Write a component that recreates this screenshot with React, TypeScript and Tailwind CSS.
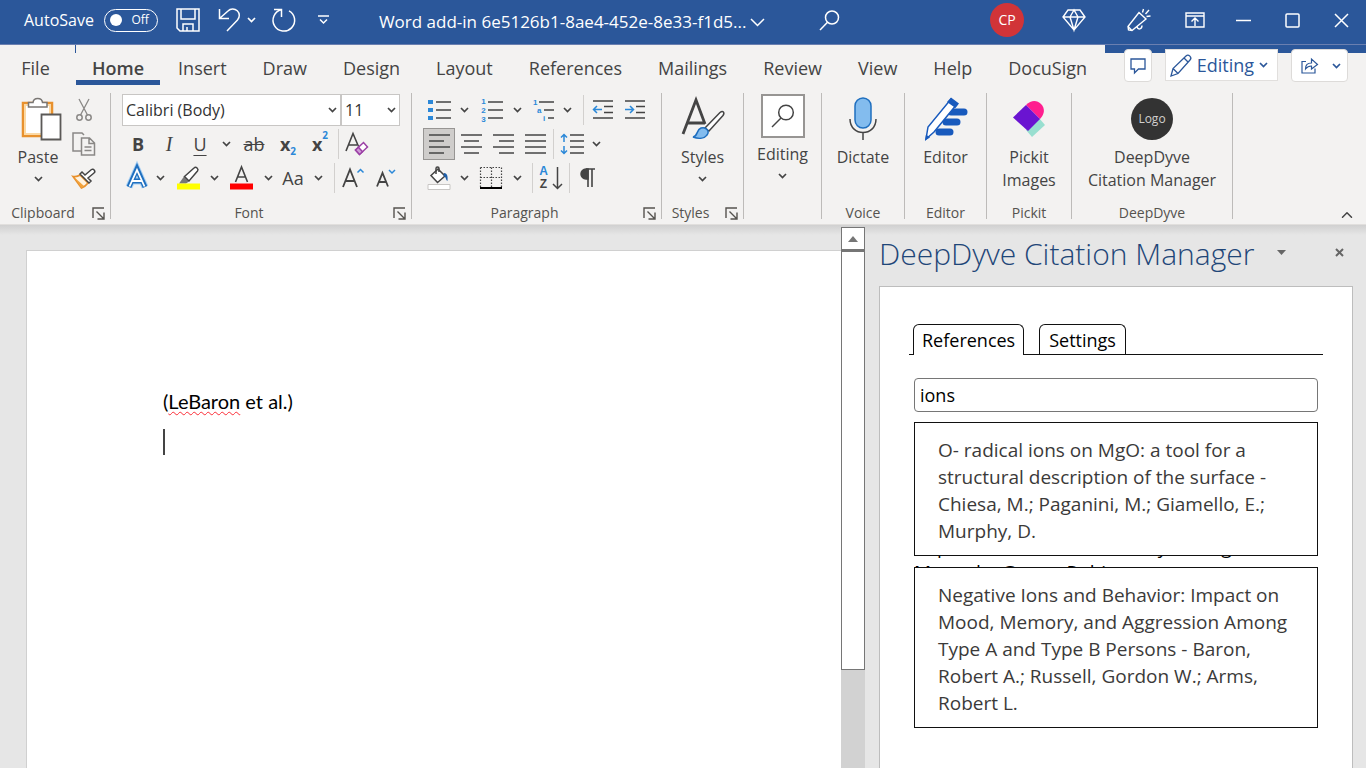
import React, { useState } from 'react';
import { ChevronUp } from 'lucide-react';

const TABS = ['File', 'Home', 'Insert', 'Draw', 'Design', 'Layout', 'References', 'Mailings', 'Review', 'View', 'Help', 'DocuSign'];

const RESULTS = [
  'O- radical ions on MgO: a tool for a structural description of the surface - Chiesa, M.; Paganini, M.; Giamello, E.; Murphy, D.',
  'Negative Ions and Behavior: Impact on Mood, Memory, and Aggression Among Type A and Type B Persons - Baron, Robert A.; Russell, Gordon W.; Arms, Robert L.',
];

type IconProps = { w: number; h: number; className?: string; children: React.ReactNode };

function Icon({ w, h, className = '', children }: IconProps) {
  return (
    <svg width={w} height={h} viewBox={`0 0 ${w} ${h}`} fill="none" stroke="currentColor" strokeWidth="1.5" className={`shrink-0 overflow-visible ${className}`} aria-hidden="true">
      {children}
    </svg>
  );
}

type ToolProps = { label: string; className?: string; children: React.ReactNode };

function Tool({ label, className = 'w-8', children }: ToolProps) {
  return (
    <button type="button" aria-label={label} className={`flex h-8 shrink-0 items-center justify-center ${className}`}>
      {children}
    </button>
  );
}

function Chevron({ className = 'w-3', label = 'More options' }: { className?: string; label?: string }) {
  return (
    <button type="button" aria-label={label} className={`flex h-8 shrink-0 items-center justify-center ${className}`}>
      <Caret />
    </button>
  );
}

function Caret() {
  return (
    <Icon w={9} h={6}>
      <path d="M1 1l3.500 3.500L8 1" strokeWidth="1.700" />
    </Icon>
  );
}

function Divider({ className = '' }: { className?: string }) {
  return <div className={`h-[30px] w-px shrink-0 bg-[#d2d0ce] ${className}`} />;
}

function Launcher({ label }: { label: string }) {
  return (
    <button type="button" aria-label={label} className="mr-[5px] ml-[6px]">
      <Icon w={13} h={13}>
        <path d="M1 11V1h11M4.500 4.500l7 7M12 5.500V12H5.500" strokeWidth="1.400" />
      </Icon>
    </button>
  );
}

type GroupProps = { label?: string; launcher?: boolean; className: string; children: React.ReactNode };

function Group({ label, launcher, className, children }: GroupProps) {
  return (
    <>
      <section aria-label={label} className={`flex h-[131px] shrink-0 flex-col ${className}`}>
        <div className="flex flex-1 pt-px">{children}</div>
        <div className="flex h-[22px] items-center text-sm text-[#55534f]">
          <span className="flex-1 text-center">{label}</span>
          {launcher && <Launcher label={`${label} settings`} />}
        </div>
      </section>
      <div className="h-[126px] w-px shrink-0 bg-[#bdbbb9]" />
    </>
  );
}

type BigButtonProps = { icon: React.ReactNode; lines: string[]; caret?: boolean; className?: string };

function BigButton({ icon, lines, caret, className = 'w-full pt-[3px]' }: BigButtonProps) {
  return (
    <button type="button" className={`flex flex-col items-center text-base leading-[23px] ${className}`}>
      <span className="mb-[5px] flex h-11 items-center justify-center">{icon}</span>
      {lines.map((line) => (
        <span key={line} className="whitespace-nowrap">{line}</span>
      ))}
      {caret && (
        <span className="flex h-5 items-center">
          <Caret />
        </span>
      )}
    </button>
  );
}

function Lines({ rows }: { rows: number[][] }) {
  return (
    <>
      {rows.map(([x1, x2, y]) => (
        <path key={y} d={`M${x1} ${y}H${x2}`} />
      ))}
    </>
  );
}

function TitleBar() {
  const [autoSave, setAutoSave] = useState(false);

  return (
    <header className="flex h-[45px] items-center border-b border-[#6a7fb0] bg-[#2b579a] pb-1 pl-6 text-white">
      <label className="flex items-center gap-[10px] text-base">
        AutoSave
        <input type="checkbox" className="peer sr-only" checked={autoSave} onChange={(e) => setAutoSave(e.target.checked)} />
        <span className="flex h-[23px] w-[54px] items-center justify-between rounded-full border border-white pl-[5px] pr-2 text-xs">
          <span className="h-3 w-3 rounded-full bg-white" />
          {autoSave ? 'On' : 'Off'}
        </span>
      </label>
      <Tool label="Save" className="w-[60px]">
        <Icon w={24} h={24}>
          <path d="M1 1h22v22H4l-3-3zM5 1v10h14V1M7 23v-7h10v7M11 19v4" />
        </Icon>
      </Tool>
      <Tool label="Undo" className="w-[22px]">
        <Icon w={22} h={24}>
          <path d="M1.500 1v9.500H11M1.500 10.500L10 3a6.500 6.500 0 0 1 9.500 9L9 23" />
        </Icon>
      </Tool>
      <Chevron className="w-6" label="Undo history" />
      <Tool label="Redo" className="w-10">
        <Icon w={24} h={24}>
          <path d="M2 1.500h7.500V9M9.300 1.800A10.800 10.800 0 1 0 17 2.800" />
        </Icon>
      </Tool>
      <Tool label="Customize Quick Access Toolbar" className="w-10">
        <Icon w={11} h={10}>
          <path d="M0 1h11M2 4.500l3.500 3.500L9 4.500" />
        </Icon>
      </Tool>
      <button type="button" className="ml-[35px] flex shrink-0 items-center gap-1 whitespace-nowrap pt-1 text-[17px]">
        Word add-in 6e5126b1-8ae4-452e-8e33-f1d5...
        <Icon w={15} h={9}>
          <path d="M1 1l6.500 6.500L14 1" />
        </Icon>
      </button>
      <Tool label="Search" className="ml-9 w-14">
        <Icon w={21} h={21}>
          <circle cx="13" cy="7.500" r="6.500" />
          <path d="M8.500 12.200L1 20" />
        </Icon>
      </Tool>
      <div className="ml-auto flex shrink-0 items-center">
        <Tool label="Account" className="w-[66px]">
          <span className="flex h-[34px] w-[34px] shrink-0 items-center justify-center rounded-full bg-[#d13438] text-sm">CP</span>
        </Tool>
        <Tool label="Premium" className="w-[68px]">
          <Icon w={24} h={22}>
            <path d="M6 1h12l5 7-11 13L1 8zM1 8h22M12 1L8 8l4 13 4-13z" strokeWidth="1.400" />
          </Icon>
        </Tool>
        <Tool label="Coming soon" className="w-[62px]">
          <Icon w={24} h={24}>
            <path d="M12 4.500l7 6.500L5 22.500l-3.500-.5-.5-3.500zM10 19c1 3 5 2.500 5-1.500M15.500 4.500l1-3.500M18.500 6L22 2M19.500 8.500l4-.5M1.500 19l3 3" strokeWidth="1.400" />
          </Icon>
        </Tool>
        <Tool label="Ribbon display options" className="w-[49px]">
          <Icon w={20} h={16}>
            <path d="M1 1h18v14H1zM1 4h18M10 14V6.500M6.500 9.500L10 6l3.500 3.500" strokeWidth="1.400" />
          </Icon>
        </Tool>
        <Tool label="Minimize" className="w-[49px]">
          <Icon w={15} h={3}><path d="M0 1.500h15" /></Icon>
        </Tool>
        <Tool label="Maximize" className="w-[49px]">
          <Icon w={15} h={15}><rect x="1" y="1" width="13" height="13" rx="1" /></Icon>
        </Tool>
        <Tool label="Close" className="w-[49px]">
          <Icon w={15} h={15}><path d="M1 1l13 13M14 1L1 14" /></Icon>
        </Tool>
      </div>
    </header>
  );
}

function TabRow() {
  return (
    <div className="flex h-10">
      <nav aria-label="Ribbon tabs" className="flex shrink-0 text-lg">
        {TABS.map((tab) =>
          tab === 'Home' ? (
            <div key={tab} className="flex flex-col">
              <div className="h-2 w-px bg-[#2b579a]" />
              <button type="button" aria-current="page" className="ml-px h-8 border-b-[5px] border-[#2b579a] px-4 pt-1 leading-[23px] font-semibold">
                {tab}
              </button>
            </div>
          ) : (
            <button key={tab} type="button" className={tab === 'File' ? 'w-[75px] pt-[6px] pr-1' : 'px-[18px] pt-[6px]'}>
              {tab}
            </button>
          )
        )}
      </nav>
      <div className="flex flex-1 items-start justify-end gap-[13px] bg-[linear-gradient(#2b579a_8px,transparent_8px)] pt-1 pr-[18px] text-[#2b579a]">
        <button type="button" aria-label="Comments" className="flex h-[33px] w-7 items-center justify-center rounded-sm border border-[#dddbd9] bg-white">
          <Icon w={16} h={16}>
            <path d="M1 1h14v10H8.500L4.500 15v-4H1z" strokeWidth="1.300" />
          </Icon>
        </button>
        <button type="button" className="flex h-8 items-center gap-[5px] border border-[#e1dfdd] bg-white pr-[9px] pl-1 text-lg">
          <Icon w={22} h={23}>
            <path d="M1 22l2-7.500L16 2c2.500-2.500 6.500 1.500 4 4L8 19.500zM3 14.500l5 5M14 4l4.500 4.500" strokeWidth="1.300" />
          </Icon>
          Editing
          <Caret />
        </button>
        <button type="button" aria-label="Share" className="flex h-[33px] items-center gap-[14px] rounded-sm border border-[#dddbd9] bg-white pr-[6px] pl-[9px]">
          <Icon w={17} h={17}>
            <path d="M5 4.500H1V16h13v-4.500M4.500 12c0-4 2-6 6-6V2l6 5.500-6 4.500V9C8 9 6 10 4.500 12z" strokeWidth="1.200" />
          </Icon>
          <Caret />
        </button>
      </div>
    </div>
  );
}

function ClipboardGroup() {
  return (
    <Group label="Clipboard" launcher className="w-[110px]">
      <BigButton
        className="w-[76px] pt-[3px]"
        lines={['Paste']}
        caret
        icon={
          <Icon w={46} h={44} className="ml-2">
            <path d="M4 6h29v33H4z" fill="#fff" stroke="#e8912d" strokeWidth="2.500" />
            <path d="M6 8h25v29H6z" stroke="#fbd9a5" strokeWidth="2" />
            <path d="M9.500 10V5.500H14c.5-5.500 9-5.500 9.500 0H28V10z" fill="#fff" stroke="#797673" />
            <path d="M22.500 17.500h19v25h-19z" fill="#fff" stroke="#5b5957" strokeWidth="1.800" />
          </Icon>
        }
      />
      <div className="flex flex-col gap-[2px] text-[#8a8886]">
        <Tool label="Cut" className="w-4">
          <Icon w={16} h={24}>
            <circle cx="3.500" cy="19.500" r="2.700" />
            <circle cx="12.500" cy="19.500" r="2.700" />
            <path d="M3 1l8.500 16M13 1L4.500 17" strokeWidth="1.300" />
          </Icon>
        </Tool>
        <Tool label="Copy" className="w-4">
          <Icon w={24} h={24}>
            <path d="M9 19H1V1h9l2 2" />
            <path d="M9.500 6h8l5 5v12h-13zM17 6v5.500h5.500M12.500 15h7M12.500 18.500h7" />
          </Icon>
        </Tool>
        <Tool label="Format Painter" className="w-4">
          <Icon w={24} h={22}>
            <path d="M8 8l8 8c-1.500 2-4 4-6.500 5L1 9.500C4 10 6 9.500 8 8z" fill="#fff3e0" stroke="#e8912d" strokeWidth="1.700" />
            <path d="M2 10l10 9-2.500 2z" fill="#f2a33c" stroke="none" />
            <path d="M8 7l9 9 2-2-3-3 6-5c2-1.500-.5-5-2.500-3.500L13 8l-3-3z" fill="#fff" stroke="#444" />
          </Icon>
        </Tool>
      </div>
    </Group>
  );
}

function FontGroup() {
  return (
    <Group label="Font" launcher className="w-[300px]">
      <div className="flex flex-col gap-[2px] pl-[11px]">
        <div className="flex">
          <div className="relative flex items-center">
            <select aria-label="Font name" className="h-8 w-[219px] appearance-none border border-[#c8c6c4] bg-white pl-[3px] text-base text-[#333]">
              <option>Calibri (Body)</option>
            </select>
            <span className="pointer-events-none absolute right-1"><Caret /></span>
          </div>
          <div className="relative flex items-center">
            <select aria-label="Font size" className="h-8 w-[59px] appearance-none border border-[#c8c6c4] bg-white pl-[3px] text-base text-[#333]">
              <option>11</option>
            </select>
            <span className="pointer-events-none absolute right-1"><Caret /></span>
          </div>
        </div>
        <div className="flex items-center text-lg">
          <Tool label="Bold"><b>B</b></Tool>
          <Tool label="Italic" className="w-[30px]"><i className="font-['Liberation_Serif',serif] text-xl">I</i></Tool>
          <Tool label="Underline"><span className="underline underline-offset-4">U</span></Tool>
          <Chevron className="w-5" />
          <Tool label="Strikethrough" className="w-9"><s className="px-px text-lg">ab</s></Tool>
          <Tool label="Subscript"><b>x</b><span className="pt-4 text-[10px] font-bold text-[#2b88d8]">2</span></Tool>
          <Tool label="Superscript"><b>x</b><span className="pb-4 text-[10px] font-bold text-[#2b88d8]">2</span></Tool>
          <Divider className="mx-[2px]" />
          <Tool label="Clear formatting">
            <Icon w={24} h={24}>
              <path d="M1 19L8 1.500l5.500 13M3.500 13H12" strokeWidth="1.600" />
              <path d="M10.500 18l8-7.500 4 4.500-8 7.500z" fill="#fff" stroke="#9b3fa5" />
              <path d="M10.500 18l3-2.800 4 4.500-3 2.800z" fill="#cf9bd6" stroke="#9b3fa5" />
            </Icon>
          </Tool>
        </div>
        <div className="flex items-center text-lg">
          <Tool label="Text effects" className="w-[30px]">
            <Icon w={22} h={22}>
              <path d="M3 20L11 2l8 18M6 14h10" stroke="#a8d0f3" strokeWidth="7" />
              <path d="M3 20L11 2l8 18M6 14h10" stroke="#1f6fbf" strokeWidth="5" />
              <path d="M3.500 19.500L11 3l7.500 16.500M6 14h10" stroke="#fff" strokeWidth="1.800" />
            </Icon>
          </Tool>
          <Chevron className="w-4" />
          <Tool label="Highlight" className="w-10">
            <Icon w={23} h={24}>
              <path d="M2 17.500l5-7 5 5-3 2z" fill="#777" stroke="none" />
              <path d="M7.500 10.500L17 2c2-2 5 1 3.500 3L12 15z" fill="#fff" />
              <path d="M0 20.500h23" stroke="#ff0" strokeWidth="6" />
            </Icon>
          </Tool>
          <Chevron />
          <Tool label="Font color" className="w-[42px]">
            <Icon w={23} h={24}>
              <path d="M5.500 16L11.500 1l6 15M7.500 11h8" strokeWidth="1.600" />
              <path d="M0 20.500h23" stroke="#f00" strokeWidth="6" />
            </Icon>
          </Tool>
          <Chevron />
          <Tool label="Change case" className="w-[38px]">Aa</Tool>
          <Chevron />
          <Divider className="ml-[10px]" />
          <Tool label="Grow font" className="w-9">
            <Icon w={22} h={22}>
              <path d="M1 20L8 2.500 15 20M3.500 14h9" strokeWidth="1.800" />
              <path d="M15.500 5.500l3-3 3 3" stroke="#2b88d8" />
            </Icon>
          </Tool>
          <Tool label="Shrink font" className="w-[30px]">
            <Icon w={20} h={20}>
              <path d="M1 18.500L6.500 5 12 18.500M3 14h7.500" strokeWidth="1.800" />
              <path d="M13 2l3 3 3-3" stroke="#2b88d8" />
            </Icon>
          </Tool>
        </div>
      </div>
    </Group>
  );
}

function ParagraphGroup() {
  return (
    <Group label="Paragraph" launcher className="w-[249px]">
      <div className="flex flex-col gap-[2px] pl-[11px]">
        <div className="flex items-center">
          <Tool label="Bullets">
            <Icon w={23} h={22}>
              <path d="M0 3h5M0 11h5M0 19h5" stroke="#2b88d8" strokeWidth="4" />
              <path d="M8 3h15M8 11h15M8 19h15" />
            </Icon>
          </Tool>
          <Chevron className="w-[18px]" />
          <Tool label="Numbering" className="w-9">
            <span className="flex w-2 flex-col font-['Liberation_Sans',sans-serif] text-[8px] leading-[9px] font-bold text-[#2b88d8]">
              <span>1</span><span>2</span><span>3</span>
            </span>
            <Icon w={15} h={22}><path d="M0 3h15M0 11h15M0 19h15" /></Icon>
          </Tool>
          <Chevron className="w-4" />
          <Tool label="Multilevel list" className="w-9">
            <Icon w={23} h={24}>
              <path d="M7 4h15M12 12h10M16 20h6" />
              <g fill="#2b88d8" stroke="none" fontFamily="Liberation Sans" fontSize="8" fontWeight="700">
                <text x="1" y="7">1</text>
                <text x="5" y="15">a</text>
                <text x="11" y="23">i</text>
              </g>
            </Icon>
          </Tool>
          <Chevron />
          <Divider className="mr-[2px] ml-[10px]" />
          <Tool label="Decrease indent">
            <Icon w={21} h={22}>
              <path d="M1 2h20M12 7.500h9M12 13.500h9M1 19h20" />
              <path d="M10 10.500H1.500M5 7l-3.500 3.500L5 14" stroke="#2b88d8" />
            </Icon>
          </Tool>
          <Tool label="Increase indent">
            <Icon w={21} h={22}>
              <path d="M1 2h20M12 7.500h9M12 13.500h9M1 19h20" />
              <path d="M1 10.500h8.500M6 7l3.500 3.500L6 14" stroke="#2b88d8" />
            </Icon>
          </Tool>
        </div>
        <div className="flex items-center">
          <Tool label="Align left" className="w-8 border border-[#979593] bg-[#cfcdcb]">
            <Icon w={21} h={20}><Lines rows={[[0, 21, 1], [0, 15, 7], [0, 21, 13], [0, 15, 19]]} /></Icon>
          </Tool>
          <Tool label="Center">
            <Icon w={21} h={20}><Lines rows={[[0, 21, 1], [3, 18, 7], [0, 21, 13], [3, 18, 19]]} /></Icon>
          </Tool>
          <Tool label="Align right">
            <Icon w={21} h={20}><Lines rows={[[0, 21, 1], [6, 21, 7], [0, 21, 13], [6, 21, 19]]} /></Icon>
          </Tool>
          <Tool label="Justify">
            <Icon w={21} h={20}><Lines rows={[[0, 21, 1], [0, 21, 7], [0, 21, 13], [0, 21, 19]]} /></Icon>
          </Tool>
          <Divider className="ml-[2px]" />
          <Tool label="Line spacing" className="w-9">
            <Icon w={24} h={22}>
              <path d="M10 2h14M10 8h14M10 14h14M10 20h14" />
              <path d="M4 9V1.500M1 4.500l3-3 3 3M4 13v7.500M1 17.500l3 3 3-3" stroke="#2b88d8" />
            </Icon>
          </Tool>
          <Chevron />
        </div>
        <div className="flex items-center">
          <Tool label="Shading">
            <Icon w={24} h={24}>
              <path d="M4 9.500L11 3l7 7-7.500 6.500z" fill="#fff" />
              <path d="M9 8V2.500c0-2 3-2 3 0V6" />
              <path d="M17 7c3.500 0 4 4 3.500 8-2-1-1-4-4-5z" fill="#1f5fa8" stroke="none" />
              <path d="M1 18.500h22v5H1z" fill="#fff" stroke="#c8c6c4" strokeWidth="1" />
            </Icon>
          </Tool>
          <Chevron className="w-[18px]" />
          <Tool label="Borders" className="w-9">
            <Icon w={22} h={22}>
              <path d="M.5.5h21M.5 10.500h21M.5.5v20M11.500.5v20M21.500.5v20" strokeDasharray="1.500 1.500" strokeWidth="1.200" />
              <path d="M0 21h22" stroke="#000" strokeWidth="2" />
            </Icon>
          </Tool>
          <Chevron className="w-4" />
          <Divider className="ml-[7px]" />
          <Tool label="Sort" className="w-9">
            <span className="flex flex-col font-['Liberation_Sans',sans-serif] text-xs leading-[13px] font-bold">
              <span className="text-[#2b88d8]">A</span><span>Z</span>
            </span>
            <Icon w={11} h={24} className="ml-1"><path d="M5.500 1v22M1 18l4.500 4.500L10 18" /></Icon>
          </Tool>
          <Divider />
          <Tool label="Show paragraph marks" className="w-9">
            <Icon w={16} h={20}>
              <path d="M8 1v18M12 1v18M6 1h9" strokeWidth="1.600" />
              <path d="M8 1H6a5 5 0 0 0 0 10h2z" fill="currentColor" />
            </Icon>
          </Tool>
        </div>
      </div>
    </Group>
  );
}

function Ribbon() {
  return (
    <div className="flex border-b border-[#e1dfdd] pt-2">
      <ClipboardGroup />
      <FontGroup />
      <ParagraphGroup />
      <Group label="Styles" launcher className="w-[81px]">
        <BigButton
          lines={['Styles']}
          caret
          icon={
            <Icon w={44} h={42}>
              <path d="M2 36L15 2l9 24M6 25h18" strokeWidth="2.800" />
              <path d="M24 30L39 14.500c3-2.500 5 0 3 3L28 33z" fill="#fff" />
              <path d="M12 39c5-.5 3-7 8-9 5-1.500 9 3 6 7-3 4-9 4-14 2z" fill="#83bcee" stroke="#1f6fbf" />
            </Icon>
          }
        />
      </Group>
      <Group className="w-[77px]">
        <BigButton
          className="w-full"
          lines={['Editing']}
          caret
          icon={
            <span className="flex h-11 w-11 items-center justify-center border-2 border-[#979593] bg-white">
              <Icon w={24} h={24}>
                <circle cx="15" cy="8.500" r="7.300" />
                <path d="M10 14L1 23" />
              </Icon>
            </span>
          }
        />
      </Group>
      <Group label="Voice" className="w-[82px]">
        <BigButton
          lines={['Dictate']}
          icon={
            <Icon w={28} h={44}>
              <rect x="6" y="1" width="16" height="30" rx="8" fill="#83bcee" stroke="#1f6fbf" />
              <path d="M1 22c0 18 26 18 26 0M14 35.500V43" />
            </Icon>
          }
        />
      </Group>
      <Group label="Editor" className="w-[81px]">
        <BigButton
          lines={['Editor']}
          icon={
            <Icon w={44} h={44}>
              <path d="M27 15h13M22 25h11M15 35h11" stroke="#185abd" strokeWidth="7" strokeLinecap="round" />
              <path d="M2 42L4 30 27 2l6 5-23 28z" fill="#fff" stroke="#185abd" />
              <path d="M23 5l4-4.500 8 6L31.500 11zM1 43.500l1-6 4 3z" fill="#185abd" stroke="none" />
            </Icon>
          }
        />
      </Group>
      <Group label="Pickit" className="w-[84px]">
        <BigButton
          lines={['Pickit', 'Images']}
          icon={
            <Icon w={32} h={36}>
              <g stroke="none">
                <path d="M26 17l6 7-13 12-6-7z" fill="#98dfd0" />
                <path d="M13 4c5-5 11-5 15-1 4 4 4 10-1 15z" fill="#ff1f8f" />
                <path d="M13 4l14 14-12 12L0 16.500z" fill="#6a14d1" />
              </g>
            </Icon>
          }
        />
      </Group>
      <Group label="DeepDyve" className="w-40">
        <BigButton
          lines={['DeepDyve', 'Citation Manager']}
          icon={<span className="flex h-[42px] w-[42px] items-center justify-center rounded-full bg-[#333] text-xs text-[#d2d0ce]">Logo</span>}
        />
      </Group>
      <button type="button" aria-label="Collapse the Ribbon" className="mr-[10px] ml-auto self-end">
        <ChevronUp size={18} strokeWidth={2} />
      </button>
    </div>
  );
}

function ScrollBar() {
  return (
    <div className="flex w-6 shrink-0 flex-col bg-[#d2d2d2] pt-[2px]">
      <button type="button" aria-label="Scroll up" className="flex h-6 items-center justify-center border border-b-2 border-[#767676] bg-white">
        <Icon w={10} h={6}><path d="M0 6l5-6 5 6z" fill="#767676" stroke="none" /></Icon>
      </button>
      <div className="h-[419px] border border-[#767676] bg-white" />
    </div>
  );
}

function Result({ text }: { text: string }) {
  return (
    <button type="button" className="block w-full border border-[#111] bg-white px-[23px] pt-[14px] pb-[10px] text-left text-[19px] leading-[27px] text-[#3b3a39]">
      {text}
    </button>
  );
}

function CitationPane() {
  const [query, setQuery] = useState('ions');

  return (
    <aside className="flex w-[501px] shrink-0 flex-col pt-2 pr-[13px] pl-[14px]">
      <div className="flex h-[53px] items-start">
        <h2 className="text-[30px] leading-[42px] font-light whitespace-nowrap text-[#1f4678]">DeepDyve Citation Manager</h2>
        <div className="ml-auto flex h-[38px] items-center gap-[49px] pr-[9px] text-[#666]">
          <button type="button" aria-label="Task pane options">
            <Icon w={9} h={5}><path d="M0 0h9L4.500 5z" fill="currentColor" stroke="none" /></Icon>
          </button>
          <button type="button" aria-label="Close pane">
            <Icon w={9} h={9}><path d="M1 1l7 7M8 1L1 8" strokeWidth="2" /></Icon>
          </button>
        </div>
      </div>
      <div className="flex-1 border border-b-0 border-[#bdbdbd] bg-white px-[29px] pt-[37px] pb-10 text-black">
        <div role="tablist" className="flex items-end gap-[15px] border-b border-[#111] pl-1 text-lg leading-6">
          <button type="button" role="tab" aria-selected="true" className="-mb-px h-[31px] rounded-t-md border border-b-0 border-[#111] bg-white px-2">
            References
          </button>
          <button type="button" role="tab" aria-selected="false" className="h-[30px] rounded-t-md border border-b-0 border-[#111] px-[9px]">
            Settings
          </button>
        </div>
        <div className="px-[5px]">
          <input
            type="text"
            aria-label="Search references"
            value={query}
            onChange={(e) => setQuery(e.target.value)}
            className="mt-[23px] mb-[10px] block h-[34px] w-full rounded-sm border border-[#767676] px-[5px] text-lg"
          />
          <Result text={RESULTS[0]} />
          {/* Bibliography entry that shows through between the suggestions */}
          <div className="flex h-[11px] items-center overflow-hidden text-[19px] leading-[25px]">
            <p className="pb-1 whitespace-nowrap">
              Impact of the ion solution by average
              <br />
              Mercado, Green, Robin
            </p>
          </div>
          <Result text={RESULTS[1]} />
        </div>
      </div>
    </aside>
  );
}

export default function App() {
  return (
    <div className="flex min-h-screen flex-col overflow-hidden bg-[#f3f2f1] font-['Open_Sans',sans-serif] text-[#444]">
      <TitleBar />
      <TabRow />
      <Ribbon />
      <div className="flex flex-1 bg-[#e6e6e6] bg-[linear-gradient(#d0d0d0,#e6e6e6_10px)]">
        <main className="flex min-w-0 flex-1 flex-col pt-[25px] pl-[26px]">
          <div className="flex-1 border-t border-l border-[#d0d0d0] bg-white pt-[136px] pl-[136px] font-['Lato',sans-serif] text-xl leading-7 text-black">
            <p>
              (<span className="underline decoration-red-500 decoration-wavy decoration-1 underline-offset-2">LeBaron</span> et al.)
            </p>
            <div className="mt-[14px] h-[26px] w-[2px] bg-[#444]" />
          </div>
        </main>
        <ScrollBar />
        <CitationPane />
      </div>
    </div>
  );
}
